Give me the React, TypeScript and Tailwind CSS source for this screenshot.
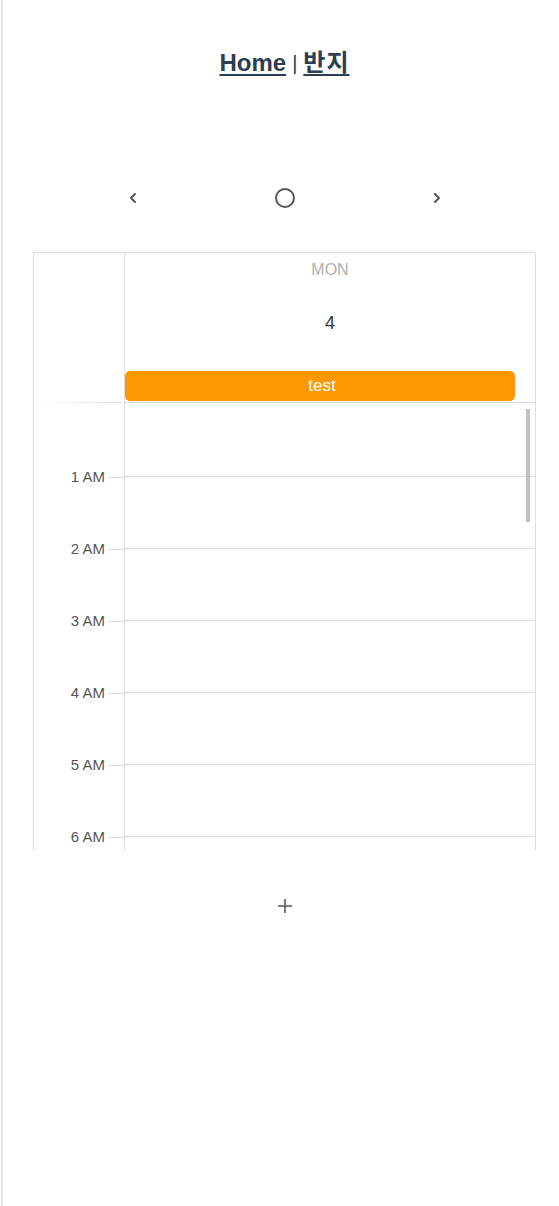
const hours = ["1 AM", "2 AM", "3 AM", "4 AM", "5 AM", "6 AM"];

const ChevronLeft = () => (
  <svg width="10" height="14" viewBox="0 0 10 14" fill="none">
    <path d="M7 3L3 7l4 4" stroke="#555" strokeWidth="2" strokeLinecap="round" strokeLinejoin="round" />
  </svg>
);

const ChevronRight = () => (
  <svg width="10" height="14" viewBox="0 0 10 14" fill="none">
    <path d="M3 3l4 4-4 4" stroke="#555" strokeWidth="2" strokeLinecap="round" strokeLinejoin="round" />
  </svg>
);

export default function App() {
  return (
    <div
      className="min-h-screen ml-px border-l-2 border-[#e6e6e6] bg-white"
      style={{ fontFamily: "'Liberation Sans', 'Noto Sans CJK KR', sans-serif" }}
    >
      <div className="ml-[30px] w-[503px]">
        {/* ══ NAV ══════════════════════════════════════════════ */}
        <nav className="h-[124px] pt-[2px] flex items-center justify-center text-[24px] text-[#2c3e50]">
          <a className="font-bold underline underline-offset-[3px]">Home</a>
          <span className="mx-[6px] text-[20px] font-normal">|</span>
          <a className="font-bold underline underline-offset-[3px] tracking-[1px]">반지</a>
        </nav>

        {/* ══ TOOLBAR ══════════════════════════════════════════ */}
        <div className="mt-[54px] h-10 flex items-center justify-center gap-[112px]">
          <button className="w-10 h-10 flex items-center justify-center">
            <ChevronLeft />
          </button>
          <button className="w-10 h-10 flex items-center justify-center">
            <span className="w-[20px] h-[20px] rounded-full border-2 border-[#555]" />
          </button>
          <button className="w-10 h-10 flex items-center justify-center">
            <ChevronRight />
          </button>
        </div>

        {/* ══ CALENDAR ═════════════════════════════════════════ */}
        <div className="mt-[34px] border-t border-x border-[#dddddd]">
          {/* header */}
          <div className="grid grid-cols-[91px_1fr]">
            <div className="border-r border-[#dddddd] h-[150px] flex flex-col justify-end">
              <div className="h-px mx-[2px] bg-gradient-to-r from-transparent to-[#dddddd]" />
            </div>
            <div className="h-[150px] border-b border-[#dddddd] flex flex-col">
              <div className="pt-[7px] h-[27px] text-center text-[16px] leading-5 text-[#b0b0b0]">MON</div>
              <div className="mt-[29px] h-[28px] text-center text-lg leading-7 text-[#333333]">4</div>
              <div className="mt-[34px] mr-[20px] h-[30px] rounded-[5px] bg-[#ff9800] text-white text-[17px] flex items-center justify-center pl-[4px]">
                test
              </div>
            </div>
          </div>

          {/* time grid */}
          <div className="relative h-[448px] overflow-hidden grid grid-cols-[91px_1fr]">
            <div className="border-r border-[#dddddd] pt-[38px]">
              {hours.map((h) => (
                <div key={h} className="h-[72px] flex items-center justify-end">
                  <span className="text-[15px] text-[#555555]">{h}</span>
                  <span className="ml-[3px] w-4 h-px bg-[#dddddd]" />
                </div>
              ))}
            </div>
            <div className="pt-[2px]">
              {[0, 1, 2, 3, 4, 5, 6].map((i) => (
                <div key={i} className="h-[72px] border-b border-[#dddddd]" />
              ))}
            </div>
            <div className="absolute right-[5px] top-[6px] w-[4px] h-[113px] bg-[#c1c1c1]" />
          </div>
        </div>

        {/* ══ ADD ══════════════════════════════════════════════ */}
        <div className="mt-[45px] flex justify-center">
          <button className="w-5 h-5 flex items-center justify-center">
            <svg width="18" height="18" viewBox="0 0 18 18" fill="none">
              <path d="M9 2v14M2 9h14" stroke="#555" strokeWidth="1.6" />
            </svg>
          </button>
        </div>
      </div>
    </div>
  );
}
